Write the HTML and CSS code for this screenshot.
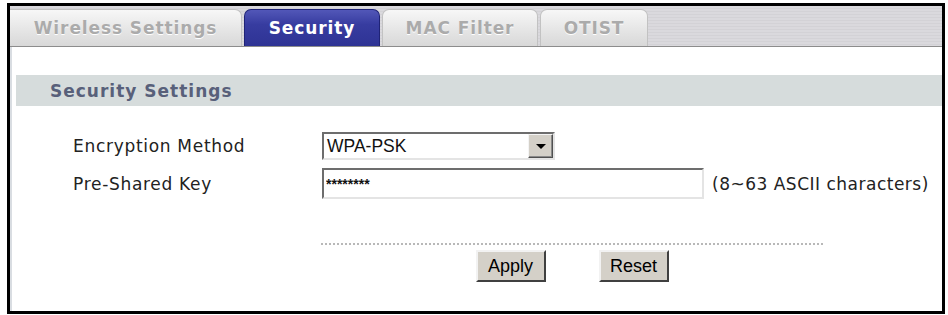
FILE: index.html
```html
<!DOCTYPE html>
<html lang="en">
<head>
    <meta charset="UTF-8">
    <title>Wireless LAN - Security</title>
    <link rel="stylesheet" href="styles.css">
</head>
<body>
    <div class="frame">
        <div class="tabbar">
            <a class="tab tab-wide" href="#">Wireless Settings</a>
            <a class="tab tab-active" href="#">Security</a>
            <a class="tab tab-mac" href="#">MAC Filter</a>
            <a class="tab tab-otist" href="#">OTIST</a>
        </div>

        <div class="content">
            <div class="section-title">Security Settings</div>

            <div class="form">
                <label class="label">Encryption Method</label>
                <div class="field">
                    <div class="select">
                        <span class="select-value">WPA-PSK</span>
                        <span class="select-arrow"></span>
                    </div>
                </div>

                <label class="label">Pre-Shared Key</label>
                <div class="field">
                    <input class="text-input" type="text" value="********">
                    <span class="hint">(8~63 ASCII characters)</span>
                </div>
            </div>

            <div class="actions">
                <div class="dots"></div>
                <div class="buttons">
                    <button class="btn">Apply</button>
                    <button class="btn">Reset</button>
                </div>
            </div>
        </div>
    </div>
</body>
</html>
```

FILE: styles.css
```css
body {
    margin: 0;
    background: #fff;
    font-family: 'DejaVu Sans', Verdana, sans-serif;
    color: #222;
}
.frame {
    margin: 3px 3px 0 7px;
    width: 932px;
    height: 305px;
    border: 3px solid #000;
    background: #fff;
    box-shadow: inset 2px 0 0 #d9dde2;
}
.tabbar {
    height: 38px;
    padding-top: 2px;
    display: flex;
    gap: 2px;
    align-items: flex-end;
    background: repeating-linear-gradient(to bottom, #dad9dd 0, #dad9dd 2px, #d3d2d6 2px, #d3d2d6 3px);
    border-bottom: 1px solid #8c8c8c;
}
.tab {
    height: 37px;
    box-sizing: border-box;
    display: flex;
    align-items: center;
    justify-content: center;
    text-decoration: none;
    font-weight: bold;
    font-size: 17px;
    letter-spacing: 0.9px;
    color: #ababab;
    text-shadow: 0 1px 0 #fff;
    background: linear-gradient(to bottom, #f7f7f7, #e4e4e4 60%, #d8d8d8);
    border: 1px solid #c2c2c2;
    border-bottom: none;
    border-radius: 7px 7px 0 0;
}
.tab-wide {
    width: 232px;
    border-top-left-radius: 0;
    border-left: none;
}
.tab-active {
    width: 136px;
    color: #fff;
    text-shadow: none;
    background: linear-gradient(to bottom, #5257b8, #373ca0 40%, #2e3394);
    border-color: #1f2377;
}
.tab-mac {
    width: 156px;
}
.tab-otist {
    width: 108px;
}
.content {
    padding-top: 28px;
}
.section-title {
    margin-left: 6px;
    height: 31px;
    padding-left: 34px;
    display: flex;
    align-items: center;
    background: #d6dcdc;
    font-weight: bold;
    font-size: 17px;
    letter-spacing: 1px;
    color: #58607a;
}
.form {
    display: grid;
    grid-template-columns: 249px auto;
    row-gap: 8px;
    padding: 26px 0 0 63px;
    align-items: center;
}
.label {
    font-size: 17px;
    letter-spacing: 0.7px;
    color: #222;
}
.field {
    display: flex;
    align-items: center;
    gap: 8px;
}
.select {
    width: 233px;
    height: 28px;
    box-sizing: border-box;
    display: flex;
    align-items: center;
    border: 2px solid;
    border-color: #6d6d6d #e4e4e4 #e4e4e4 #6d6d6d;
    background: #fff;
    font-family: 'Liberation Sans', Arial, sans-serif;
    font-size: 17.5px;
    color: #111;
}
.select-value {
    flex: 1;
    padding-left: 3px;
}
.select-arrow {
    width: 25px;
    height: 24px;
    box-sizing: border-box;
    background: #d4d0c8;
    border: 1px solid;
    border-color: #f4f4f4 #505050 #505050 #f4f4f4;
    box-shadow: inset -1px -1px 0 #8a8a8a;
    display: flex;
    align-items: center;
    justify-content: center;
}
.select-arrow::after {
    content: "";
    border-left: 5px solid transparent;
    border-right: 5px solid transparent;
    border-top: 5px solid #000;
}
.text-input {
    width: 382px;
    height: 31px;
    box-sizing: border-box;
    margin: 0;
    padding: 0 2px;
    border: 2px solid;
    border-color: #6d6d6d #e4e4e4 #e4e4e4 #6d6d6d;
    font-family: 'Liberation Sans', Arial, sans-serif;
    font-size: 14px;
    font-weight: bold;
    color: #111;
    outline: none;
}
.hint {
    font-size: 17px;
    letter-spacing: 0.5px;
    color: #222;
}
.actions {
    width: 502px;
    margin: 44px 0 0 311px;
}
.dots {
    border-top: 2px dotted #b8b8b8;
}
.buttons {
    display: flex;
    justify-content: center;
    gap: 53px;
    margin-top: 5px;
}
.btn {
    width: 70px;
    height: 32px;
    background: #d4d0c8;
    border: 2px solid;
    border-color: #f2f2f2 #404040 #404040 #f2f2f2;
    font-family: 'Liberation Sans', Arial, sans-serif;
    font-size: 18px;
    color: #000;
    padding: 0;
}
```
